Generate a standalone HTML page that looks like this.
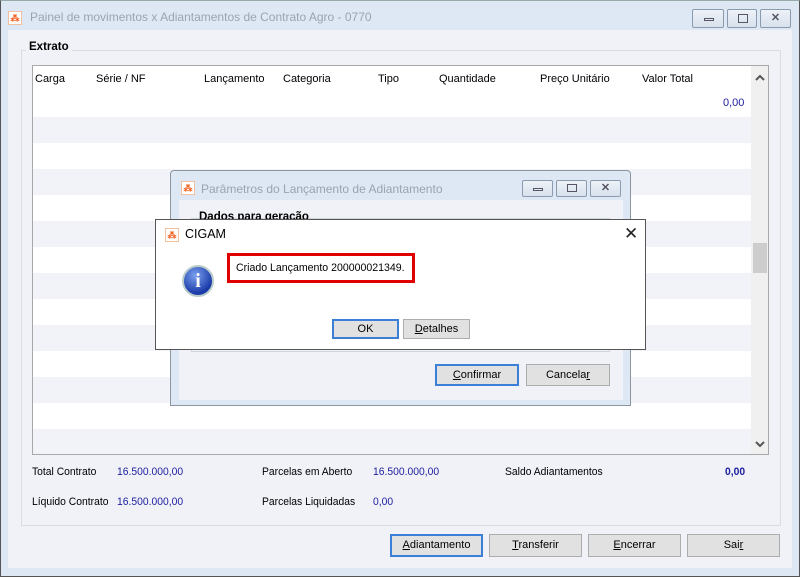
<!DOCTYPE html>
<html><head><meta charset="utf-8"><style>
*{box-sizing:border-box;margin:0;padding:0}
body{width:800px;height:577px;position:relative;overflow:hidden;font-family:"Liberation Sans",sans-serif;font-size:11px;color:#000;background:#dde8f4}
.a{position:absolute;white-space:nowrap}
.btn{position:absolute;background:#e1e1e1;border:1px solid #adadad;text-align:center;font-size:11px;line-height:20px}
.btn.def{border:2px solid #3c7fd6;line-height:18px}
.logo{position:absolute;width:14px;height:14px;background:#fff;border:1px solid #f0c0a0;color:#f06020;font-size:9px;line-height:12px;text-align:center;font-weight:bold}
.wb{position:absolute;height:19px;border:1px solid #8a9bb0;border-radius:2px;background:linear-gradient(#eef2f8,#d8e1ec)}
.blue{color:#2020a0}
.c{transform:scaleX(.94);transform-origin:left}
</style></head><body>
<div class="a" style="left:0;top:0;width:800px;height:577px;border:1px solid #555;border-top-color:#9aa;background:#dde8f4"></div>
<div class="logo" style="left:8px;top:11px">⁂</div>
<div class="a" style="left:30px;top:10px;font-size:12px;color:#9aa4ae">Painel de movimentos x Adiantamentos de Contrato Agro - 0770</div>
<div class="wb" style="left:692px;top:9px;width:32px"><div class="a" style="left:11px;top:8px;width:10px;height:3px;border:1px solid #556"></div></div>
<div class="wb" style="left:727px;top:9px;width:30px"><div class="a" style="left:10px;top:4px;width:10px;height:9px;border:1px solid #556"></div></div>
<div class="wb" style="left:760px;top:9px;width:31px;text-align:center;line-height:17px;color:#556;font-weight:bold">✕</div>
<div class="a" style="left:8px;top:30px;width:784px;height:538px;background:#f0f2f8"></div>
<div class="a" style="left:21px;top:50px;width:760px;height:476px;border:1px solid #d8dce4"></div>
<div class="a" style="left:26px;top:41px;background:#f0f2f8;padding:0 3px;font-weight:bold;font-size:11.5px">Extrato</div>
<div class="a" style="left:32px;top:65px;width:737px;height:390px;border:1px solid #a8a8a8;background:#fff;overflow:hidden">
<div class="a" style="left:0;top:25px;width:718px;height:364px;background:repeating-linear-gradient(#fff 0 26px,#f2f3f8 26px 52px)"></div>
<div class="a" style="left:2px;top:7px">Carga</div>
<div class="a" style="left:63px;top:7px">Série / NF</div>
<div class="a" style="left:171px;top:7px">Lançamento</div>
<div class="a" style="left:250px;top:7px">Categoria</div>
<div class="a" style="left:345px;top:7px">Tipo</div>
<div class="a" style="left:406px;top:7px">Quantidade</div>
<div class="a" style="left:507px;top:7px">Preço Unitário</div>
<div class="a" style="left:609px;top:7px">Valor Total</div>
<div class="a blue" style="left:690px;top:31px">0,00</div>
<div class="a" style="left:718px;top:0;width:18px;height:389px;background:#f0f0f0"></div>
<div class="a" style="left:720px;top:177px;width:14px;height:30px;background:#cdcdcd"></div>
<svg class="a" style="left:722px;top:8px" width="10" height="8"><path d="M1 6L5 2L9 6" stroke="#555" stroke-width="2" fill="none"/></svg>
<svg class="a" style="left:722px;top:374px" width="10" height="8"><path d="M1 2L5 6L9 2" stroke="#555" stroke-width="2" fill="none"/></svg>
</div>
<div class="a c" style="left:32px;top:466px">Total Contrato</div>
<div class="a blue c" style="left:117px;top:466px">16.500.000,00</div>
<div class="a c" style="left:262px;top:466px">Parcelas em Aberto</div>
<div class="a blue c" style="left:373px;top:466px">16.500.000,00</div>
<div class="a c" style="left:505px;top:466px">Saldo Adiantamentos</div>
<div class="a blue c" style="left:725px;top:466px;font-weight:bold">0,00</div>
<div class="a c" style="left:32px;top:496px">Líquido Contrato</div>
<div class="a blue c" style="left:117px;top:496px">16.500.000,00</div>
<div class="a c" style="left:262px;top:496px">Parcelas Liquidadas</div>
<div class="a blue c" style="left:373px;top:496px">0,00</div>
<div class="btn def" style="left:390px;top:534px;width:93px;height:23px"><u>A</u>diantamento</div>
<div class="btn" style="left:489px;top:534px;width:93px;height:23px"><u>T</u>ransferir</div>
<div class="btn" style="left:588px;top:534px;width:93px;height:23px"><u>E</u>ncerrar</div>
<div class="btn" style="left:687px;top:534px;width:93px;height:23px">Sai<u>r</u></div>
<!-- param dialog -->
<div class="a" style="left:170px;top:170px;width:461px;height:236px;border:1px solid #8c96a0;background:#dde8f4;border-radius:4px 4px 0 0"></div>
<div class="logo" style="left:181px;top:181px">⁂</div>
<div class="a" style="left:201px;top:182px;font-size:12px;color:#9aa4ae">Parâmetros do Lançamento de Adiantamento</div>
<div class="wb" style="left:522px;top:180px;width:31px;height:17px"><div class="a" style="left:10px;top:7px;width:10px;height:3px;border:1px solid #556"></div></div>
<div class="wb" style="left:556px;top:180px;width:31px;height:17px"><div class="a" style="left:10px;top:3px;width:10px;height:8px;border:1px solid #556"></div></div>
<div class="wb" style="left:590px;top:180px;width:31px;height:17px;text-align:center;line-height:15px;color:#556;font-weight:bold">✕</div>
<div class="a" style="left:179px;top:200px;width:444px;height:200px;background:#f0f2f8"></div>
<div class="a" style="left:191px;top:218px;width:419px;height:134px;border:1px solid #d0d4dc"></div>
<div class="a" style="left:199px;top:211px;font-weight:bold;font-size:11.5px">Dados para geração</div>
<div class="btn def" style="left:435px;top:364px;width:84px;height:22px"><u>C</u>onfirmar</div>
<div class="btn" style="left:526px;top:364px;width:84px;height:22px">Cancela<u>r</u></div>
<!-- message box -->
<div class="a" style="left:155px;top:219px;width:491px;height:131px;background:#fff;border:1px solid #555"></div>
<div class="logo" style="left:165px;top:228px">⁂</div>
<div class="a" style="left:185px;top:227px;font-size:12.5px">CIGAM</div>
<div class="a" style="left:624px;top:224px;font-size:17px;color:#222">✕</div>
<div class="a" style="left:182px;top:265px;width:32px;height:32px;border-radius:50%;border:2px solid #bcc;background:radial-gradient(circle at 40% 30%,#7aa0ee,#1a3aa8 70%);color:#fff;font-weight:bold;font-size:20px;text-align:center;line-height:28px;font-family:'Liberation Serif',serif">i</div>
<div class="a" style="left:227px;top:253px;width:188px;height:30px;border:3px solid #e00000"></div>
<div class="a" style="left:236px;top:262px;font-size:11px;transform:scaleX(.96);transform-origin:left">Criado Lançamento 200000021349.</div>
<div class="btn def" style="left:332px;top:319px;width:67px;height:20px;line-height:16px">OK</div>
<div class="btn" style="left:403px;top:319px;width:67px;height:20px;line-height:18px"><u>D</u>etalhes</div>
</body></html>
